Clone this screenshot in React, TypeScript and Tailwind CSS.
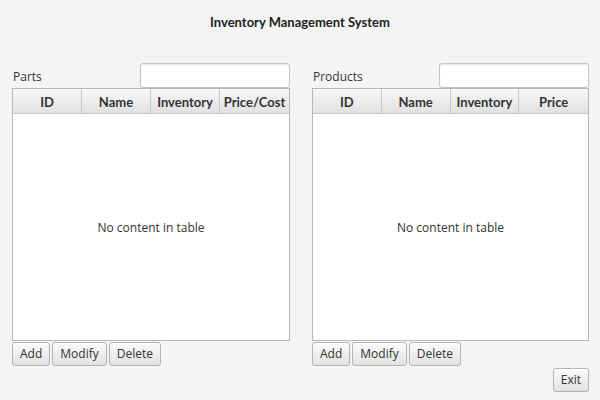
import React from "react";

const FONT = "font-['Open_Sans','Noto_Sans',sans-serif]";

function FxButton({ label }: { label: string }) {
  return (
    <button className="flex h-[24px] items-center rounded-[3px] border border-[#b3b3b3] bg-gradient-to-b from-[#fbfbfb] to-[#e2e2e2] px-[7px] text-[12px] leading-none text-[#333333] shadow-[inset_0_1px_0_#ffffff]">
      {label}
    </button>
  );
}

function TablePane({ title, columns, withExit }: { title: string; columns: string[]; withExit?: boolean }) {
  return (
    <div className="flex flex-col">
      <div className="flex h-[25px] items-center justify-between">
        <span className="pl-[1px] pt-[3px] text-[12px] text-[#333333]">{title}</span>
        <div className="h-[25px] w-[150px] rounded-[3px] border border-[#c4c4c4] bg-white shadow-[inset_0_1px_1px_#e8e8e8]" />
      </div>
      <div className="flex h-[253px] flex-col border border-[#b8b8b8] bg-white">
        <div className="grid h-[25px] grid-cols-4 border-b border-[#c6c6c6] bg-gradient-to-b from-[#f8f8f8] to-[#e1e1e1]">
          {columns.map((col, i) => (
            <div
              key={col}
              className={`flex items-center justify-center pt-[3px] font-['Lato',sans-serif] text-[13px] font-bold text-[#333333] ${i < columns.length - 1 ? "border-r border-[#c6c6c6]" : ""}`}
            >
              {col}
            </div>
          ))}
        </div>
        <div className="flex flex-1 items-center justify-center pt-[1px] text-[12px] text-[#333333]">No content in table</div>
      </div>
      <div className="mt-[1px] flex gap-[2px]">
        <FxButton label="Add" />
        <FxButton label="Modify" />
        <FxButton label="Delete" />
      </div>
      {withExit && (
        <div className="mt-[2px] flex justify-end">
          <FxButton label="Exit" />
        </div>
      )}
    </div>
  );
}

export default function App() {
  return (
    <div className={`flex h-[400px] w-[600px] flex-col bg-[#f4f4f4] ${FONT}`}>
      <div className="flex h-[44px] items-center justify-center pt-[2px] font-['Lato',sans-serif] text-[13px] font-bold text-[#222222]">Inventory Management System</div>
      <div className="mt-[19px] grid grid-cols-[278px_277px] gap-x-[22px] pl-[12px]">
        <TablePane title="Parts" columns={["ID", "Name", "Inventory", "Price/Cost"]} />
        <TablePane title="Products" columns={["ID", "Name", "Inventory", "Price"]} withExit />
      </div>
    </div>
  );
}
